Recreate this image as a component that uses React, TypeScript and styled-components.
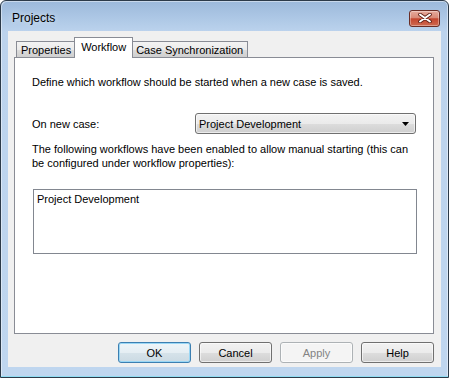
import React from 'react'
import styled, { createGlobalStyle } from 'styled-components'

const GlobalStyle = createGlobalStyle`
  html, body {
    margin: 0;
    padding: 0;
    background: #ffffff;
  }
  body {
    font-family: 'Liberation Sans', Arial, sans-serif;
    font-size: 11px;
    color: #000;
  }
`

const Window = styled.div`
  box-sizing: border-box;
  width: 449px;
  height: 378px;
  display: flex;
  flex-direction: column;
  padding: 0 7px 10px;
  border: 1px solid #2c3a49;
  border-radius: 6px 6px 0 0;
  background: linear-gradient(180deg, #9cb9db 0px, #b0cae7 20px, #bcd3ed 31px, #bfd6ef 100%);
  box-shadow: inset 0 -1px 0 #8fdcf2, inset 1px 1px 0 rgba(255, 255, 255, .45), inset -1px 0 0 rgba(255, 255, 255, .45);
  overflow: hidden;
`

const TitleBar = styled.div`
  height: 30px;
  flex: none;
  box-sizing: border-box;
  display: flex;
  align-items: center;
  justify-content: space-between;
  padding: 4px 1px 0 4px;
`

const Caption = styled.div`
  font-size: 12px;
  color: #000;
  text-shadow: 0 0 6px rgba(255, 255, 255, .7);
`

const CloseButton = styled.div`
  box-sizing: border-box;
  width: 31px;
  height: 17px;
  display: flex;
  align-items: center;
  justify-content: center;
  border: 1px solid #6a2d25;
  border-radius: 3px;
  background: linear-gradient(180deg, #e6ab9d 0%, #d98a77 45%, #c4462f 52%, #cf6a50 100%);
  box-shadow: inset 0 0 0 1px rgba(255, 255, 255, .35);
`

const Client = styled.div`
  flex: 1;
  display: flex;
  flex-direction: column;
  padding: 6px 7px 0 6px;
  background: #f0f0f0;
`

const TabBar = styled.div`
  display: flex;
  align-items: flex-end;
  height: 20px;
  padding-left: 2px;
  position: relative;
  z-index: 1;
`

const Tab = styled.div<{ $active?: boolean }>`
  box-sizing: border-box;
  display: flex;
  align-items: center;
  padding: 0 ${p => (p.$active ? '6px' : '4px')};
  padding-bottom: ${p => (p.$active ? '3px' : '0')};
  height: ${p => (p.$active ? '21px' : '16px')};
  margin: 0 ${p => (p.$active ? '-2px' : '0')} ${p => (p.$active ? '-1px' : '0')};
  border: 1px solid #898c95;
  border-bottom: none;
  background: ${p => (p.$active ? '#ffffff' : 'linear-gradient(180deg, #f3f3f3 0%, #ebebeb 50%, #dddddd 51%, #cfcfcf 100%)')};
  position: relative;
  z-index: ${p => (p.$active ? 2 : 1)};
  white-space: nowrap;
`

const Panel = styled.div`
  box-sizing: border-box;
  height: 277px;
  flex: none;
  padding: 17px 16px 0 17px;
  border: 1px solid #898c95;
  background: #ffffff;
`

const Text = styled.div`
  line-height: 14px;
`

const FieldRow = styled.div`
  display: flex;
  align-items: center;
  height: 21px;
  margin-top: 24px;
`

const Label = styled.div`
  width: 163px;
`

const Combo = styled.div`
  box-sizing: border-box;
  width: 221px;
  height: 21px;
  display: flex;
  align-items: center;
  justify-content: space-between;
  padding: 0 6px 0 3px;
  border: 1px solid #707070;
  border-radius: 3px;
  background: linear-gradient(180deg, #f2f2f2 0%, #ebebeb 50%, #dddddd 51%, #cfcfcf 100%);
  box-shadow: inset 0 0 0 1px rgba(255, 255, 255, .6);
`

const Note = styled(Text)`
  margin-top: 8px;
`

const ListBox = styled.div`
  box-sizing: border-box;
  width: 384px;
  height: 65px;
  margin: 19px 0 0 1px;
  padding: 2px 3px;
  border: 1px solid #828790;
  background: #ffffff;
  line-height: 14px;
`

const Footer = styled.div`
  display: flex;
  justify-content: flex-end;
  gap: 8px;
  margin-top: 8px;
`

const Button = styled.div<{ $default?: boolean; $disabled?: boolean }>`
  box-sizing: border-box;
  width: 73px;
  height: 21px;
  display: flex;
  align-items: center;
  justify-content: center;
  border: 1px solid ${p => (p.$default ? '#3c7fb1' : p.$disabled ? '#adb2b5' : '#707070')};
  border-radius: 3px;
  color: ${p => (p.$disabled ? '#838383' : '#000')};
  background: ${p => (p.$disabled
    ? '#f4f4f4'
    : p.$default
      ? 'linear-gradient(180deg, #eef5f9 0%, #e5eef3 50%, #d6e3ea 51%, #cbdae3 100%)'
      : 'linear-gradient(180deg, #f2f2f2 0%, #ebebeb 50%, #dddddd 51%, #cfcfcf 100%)')};
  box-shadow: inset 0 0 0 1px ${p => (p.$default ? '#9ad7f5' : 'rgba(255, 255, 255, .6)')};
`

const Arrow = () => (
  <svg width="7" height="4" viewBox="0 0 7 4">
    <path d="M0 0h7L3.5 4z" fill="#000" />
  </svg>
)

const CloseGlyph = () => (
  <svg width="14" height="10" viewBox="0 0 14 10">
    <path d="M2 1.5l10 7M12 1.5l-10 7" stroke="#5a1d14" strokeWidth="3.6" strokeLinecap="round" />
    <path d="M2 1.5l10 7M12 1.5l-10 7" stroke="#ffffff" strokeWidth="2" strokeLinecap="round" />
  </svg>
)

const App: React.FC = () => {
  const tabs = ['Properties', 'Workflow', 'Case Synchronization']
  const buttons = [
    { label: 'OK', isDefault: true },
    { label: 'Cancel' },
    { label: 'Apply', disabled: true },
    { label: 'Help' }
  ]

  return (
    <>
      <GlobalStyle />
      <Window>
        <TitleBar>
          <Caption>Projects</Caption>
          <CloseButton>
            <CloseGlyph />
          </CloseButton>
        </TitleBar>
        <Client>
          <TabBar>
            {tabs.map(tab => (
              <Tab key={tab} $active={tab === 'Workflow'}>{tab}</Tab>
            ))}
          </TabBar>
          <Panel>
            <Text>Define which workflow should be started when a new case is saved.</Text>
            <FieldRow>
              <Label>On new case:</Label>
              <Combo>
                <span>Project Development</span>
                <Arrow />
              </Combo>
            </FieldRow>
            <Note>
              The following workflows have been enabled to allow manual starting (this can
              <br />
              be configured under workflow properties):
            </Note>
            <ListBox>Project Development</ListBox>
          </Panel>
          <Footer>
            {buttons.map(b => (
              <Button key={b.label} $default={b.isDefault} $disabled={b.disabled}>{b.label}</Button>
            ))}
          </Footer>
        </Client>
      </Window>
    </>
  )
}

export default App
